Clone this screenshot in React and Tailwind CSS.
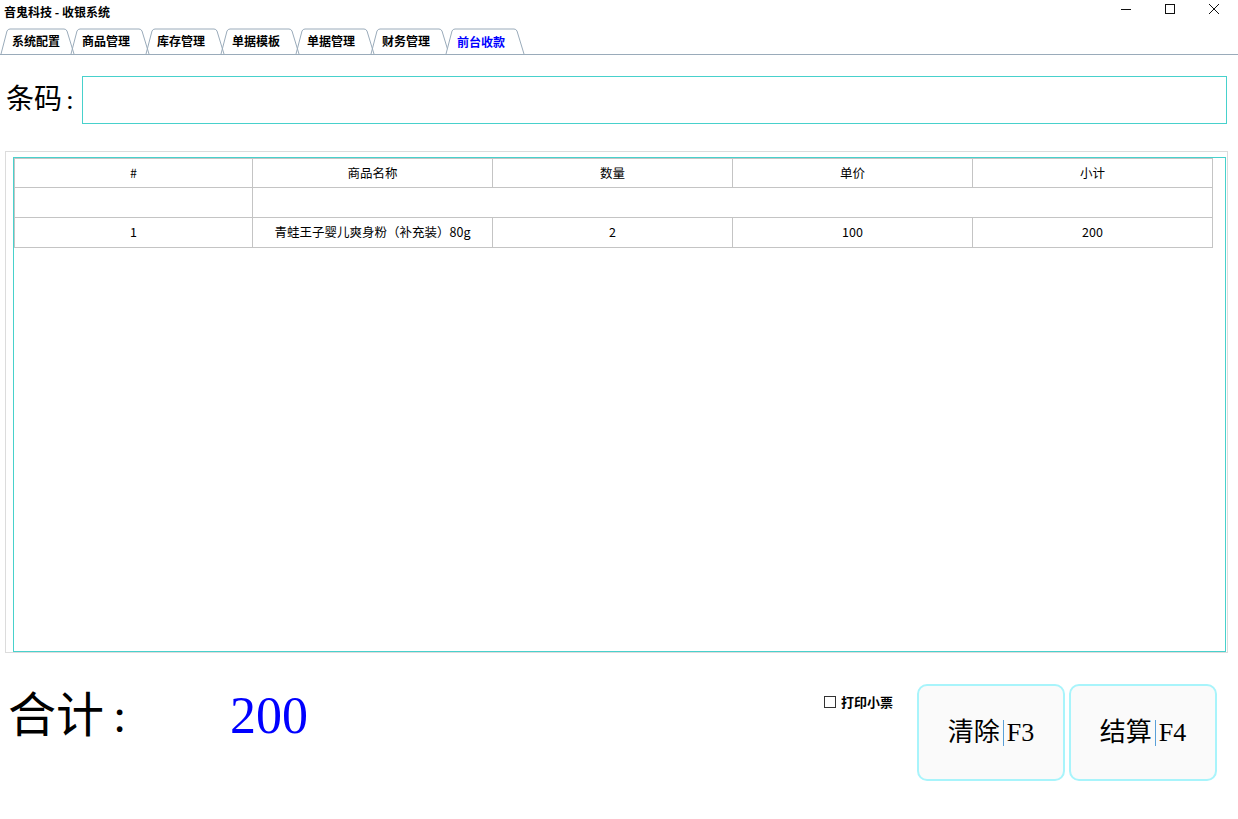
import React from 'react';

const tabs = ['系统配置', '商品管理', '库存管理', '单据模板', '单据管理', '财务管理', '前台收款'];
const active = 6;

const rows = [
  { id: '1', name: '青蛙王子婴儿爽身粉（补充装）80g', qty: '2', price: '100', sub: '200' },
];

function TabShape({ w, on }) {
  // outline of a slanted tab
  return (
    <svg className="absolute left-0 top-0 pointer-events-none" width={w + 6} height="26" viewBox={`0 0 ${w + 6} 26`}>
      <path
        d={`M1 26 L7 3 Q8 1 10 1 L${w - 6} 1 Q${w - 4} 1 ${w - 3} 3 L${w + 4} 26`}
        fill={on ? '#ffffff' : 'none'}
        stroke="#9aabba"
        strokeWidth="1"
      />
    </svg>
  );
}

function Cell({ children, className = 'h-[30px]', ...rest }) {
  return (
    <td {...rest} className={`border border-[#c4c4c4] text-center text-[12.5px] text-black ${className}`}>
      {children}
    </td>
  );
}

export default function App() {
  const sans = { fontFamily: '"Noto Sans CJK SC", "Liberation Sans", sans-serif' };
  const serif = { fontFamily: '"Liberation Serif", "Noto Sans CJK SC", serif' };

  return (
    <div className="w-[1238px] h-[819px] bg-white flex flex-col overflow-hidden" style={sans}>
      {/* title bar */}
      <div className="h-[28px] flex items-start justify-between">
        <div className="pl-[4px] pt-[3px] text-[12px] font-bold leading-[18px] text-black">音鬼科技 - 收银系统</div>
        <div className="flex items-center pt-[2px]">
          <div className="w-[44px] h-[14px] flex items-center justify-center">
            <svg width="12" height="12" viewBox="0 0 12 12"><path d="M1 6.5 H11" stroke="#111" strokeWidth="1" /></svg>
          </div>
          <div className="w-[44px] h-[14px] flex items-center justify-center">
            <svg width="12" height="12" viewBox="0 0 12 12"><rect x="1.5" y="1.5" width="9" height="9" fill="none" stroke="#111" strokeWidth="1" /></svg>
          </div>
          <div className="w-[44px] h-[14px] flex items-center justify-center mr-[2px]">
            <svg width="12" height="12" viewBox="0 0 12 12"><path d="M1 1 L11 11 M11 1 L1 11" stroke="#111" strokeWidth="1" /></svg>
          </div>
        </div>
      </div>

      {/* tabs */}
      <div className="h-[27px] flex items-end border-b border-[#9aabba]">
        {tabs.map((t, i) => {
          const w = i === 0 ? 70 : 75;
          const on = i === active;
          return (
            <div
              key={t}
              className={`relative h-[26px] flex items-center ${on ? 'z-10 -mb-[1px] h-[27px]' : ''}`}
              style={{ width: w }}
            >
              <TabShape w={w} on={on} />
              <span
                className={`relative pl-[12px] text-[12px] font-bold leading-none ${on ? 'text-[#0000ff]' : 'text-black'}`}
              >
                {t}
              </span>
            </div>
          );
        })}
      </div>

      {/* barcode */}
      <div className="flex items-center mt-[21px] h-[48px] pr-[11px]">
        <div className="w-[82px] pl-[6px] text-[28px] leading-none text-black" style={serif}>
          条码<span className="ml-[4px]">:</span>
        </div>
        <input className="flex-1 h-[48px] border border-[#48d1cc] outline-none px-2 text-[20px]" />
      </div>

      {/* table panel */}
      <div className="mt-[27px] ml-[5px] mr-[10px] h-[502px] border border-[#dcdcdc] pl-[7px] pt-[5px] pr-[1px] flex flex-col">
        <div className="flex-1 border border-[#48d1cc] bg-white">
          <table className="border-collapse table-fixed w-[1198px]">
            <colgroup>
              <col className="w-[238px]" />
              <col className="w-[240px]" />
              <col className="w-[240px]" />
              <col className="w-[240px]" />
              <col className="w-[240px]" />
            </colgroup>
            <thead>
              <tr>
                <Cell className="h-[29px]">#</Cell>
                <Cell className="h-[29px]">商品名称</Cell>
                <Cell className="h-[29px]">数量</Cell>
                <Cell className="h-[29px]">单价</Cell>
                <Cell className="h-[29px]">小计</Cell>
              </tr>
            </thead>
            <tbody>
              <tr>
                <Cell></Cell>
                <Cell colSpan={4}></Cell>
              </tr>
              {rows.map(r => (
                <tr key={r.id}>
                  <Cell>{r.id}</Cell>
                  <Cell>{r.name}</Cell>
                  <Cell>{r.qty}</Cell>
                  <Cell>{r.price}</Cell>
                  <Cell>{r.sub}</Cell>
                </tr>
              ))}
            </tbody>
          </table>
        </div>
      </div>

      {/* footer */}
      <div className="flex mt-[31px] pr-[21px]">
        <div className="flex items-center h-[64px] pl-[8px] leading-none" style={serif}>
          <span className="w-[222px] text-[48px] text-black">
            合计<span className="ml-[9px]">:</span>
          </span>
          <span className="text-[52px] text-[#0000ff]">200</span>
        </div>
        <div className="flex-1" />
        <label className="flex items-center gap-[5px] h-[14px] mt-[11px] mr-[24px] text-[13px] font-bold text-black">
          <span className="w-[12px] h-[12px] border border-[#333] bg-white" />
          打印小票
        </label>
        <div className="flex gap-[4px]">
          {[['清除', 'F3'], ['结算', 'F4']].map(([a, b]) => (
            <button
              key={b}
              className="w-[148px] h-[97px] rounded-[10px] border-2 border-[#a8f4fb] bg-[#fafafa] flex items-center justify-center text-[26px] text-black"
              style={serif}
            >
              <span>{a}</span>
              <span className="mx-[3px] w-[1px] h-[26px] bg-[#5aa0d8]" />
              <span>{b}</span>
            </button>
          ))}
        </div>
      </div>
    </div>
  );
}
